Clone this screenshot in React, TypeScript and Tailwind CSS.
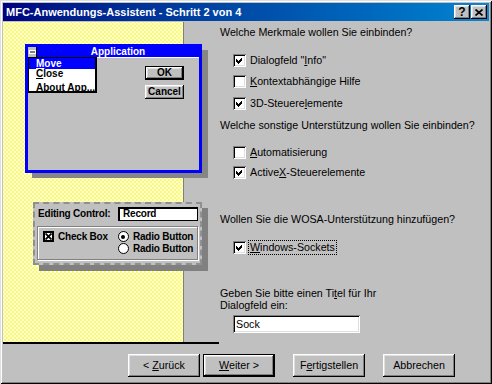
import React from 'react';

const raised =
  'shadow-[inset_-1px_-1px_0_#000000,inset_1px_1px_0_#ffffff,inset_-2px_-2px_0_#808080,inset_2px_2px_0_#dfdfdf]';
const sunken =
  'shadow-[inset_1px_1px_0_#808080,inset_-1px_-1px_0_#ffffff,inset_2px_2px_0_#000000,inset_-2px_-2px_0_#dfdfdf]';

const U = ({ children }: { children: React.ReactNode }) => (
  <span className="underline decoration-1 underline-offset-[1px]">{children}</span>
);

const CheckBox = ({ checked }: { checked: boolean }) => (
  <span className={`block w-[13px] h-[13px] shrink-0 bg-white ${sunken}`}>
    {checked && (
      <svg width="13" height="13" viewBox="0 0 13 13" shapeRendering="crispEdges">
        <polygon points="3,5 5,7 9,3 9,6 5,10 3,8" fill="#000" />
      </svg>
    )}
  </span>
);

const Option = ({ checked, children, focus }: { checked: boolean; children: React.ReactNode; focus?: boolean }) => (
  <div className="flex items-center h-[13px] pl-[13px]">
    <CheckBox checked={checked} />
    <span className={`ml-[3px] leading-[13px] px-[1px] whitespace-nowrap ${focus ? 'outline outline-1 outline-dotted outline-black' : ''}`}>
      {children}
    </span>
  </div>
);

const Button = ({ children, isDefault }: { children: React.ReactNode; isDefault?: boolean }) =>
  isDefault ? (
    <div className="w-[72px] h-[23px] border border-black">
      <div className={`w-full h-full flex items-center justify-center whitespace-pre ${raised}`}>{children}</div>
    </div>
  ) : (
    <div className={`w-[72px] h-[23px] flex items-center justify-center whitespace-pre ${raised}`}>{children}</div>
  );

function TitleBar() {
  return (
    <div className="h-[18px] flex items-center bg-linear-to-r from-[#000080] to-[#1084d0] pl-[3px] pr-[2px]">
      <span className="flex-1 text-white font-bold text-[11px] leading-none whitespace-nowrap">MFC-Anwendungs-Assistent - Schritt 2 von 4</span>
      <div className="flex gap-[1px]">
        <div className={`w-[16px] h-[14px] bg-[#c0c0c0] flex items-center justify-center font-bold text-[12px] leading-none ${raised}`}>
          ?
        </div>
        <div className={`w-[16px] h-[14px] bg-[#c0c0c0] flex items-center justify-center ${raised}`}>
          <svg width="8" height="7" viewBox="0 0 8 7">
            <path d="M0.5 0.5 L7.5 6.5 M7.5 0.5 L0.5 6.5" stroke="#000" strokeWidth="1.7" />
          </svg>
        </div>
      </div>
    </div>
  );
}

function AppSample() {
  return (
    <>
      <div className="absolute left-[29px] top-[28px] w-[176px] h-[128px] bg-[#868686]" />
      <div className="absolute left-[22px] top-[22px] w-[177px] h-[129px] border-[3px] border-[#0000ff] bg-[#c0c0c0] flex flex-col font-bold text-[10px] whitespace-nowrap">
        <div className="h-[10px] bg-[#0000ff] flex items-center">
          <div className="w-[9px] h-[10px] bg-[#c0c0c0] border-r border-black flex items-center justify-center">
            <div className="w-[5px] h-[2px] bg-[#808080] outline outline-1 outline-white" />
          </div>
          <div className="flex-1 text-center text-white leading-none">Application</div>
        </div>
        <div className="h-px bg-white" />
        <div className="flex-1 flex flex-col items-end pt-[8px] pr-[15px] gap-[5px]">
          <div className="w-[39px] h-[14px] border border-black">
            <div className={`w-full h-full flex items-center justify-center leading-none ${raised}`}>OK</div>
          </div>
          <div className={`w-[39px] h-[14px] flex items-center justify-center leading-none ${raised}`}>Cancel</div>
        </div>
        <div className="absolute left-0 top-[10px] w-[69px] h-[36px] bg-white border border-black border-r-2 border-b-2 flex flex-col">
          <div className="h-[11px] bg-[#0000ff] text-white pl-[7px] leading-[11px]">
            <U>M</U>ove
          </div>
          <div className="h-[10px] pl-[7px] leading-[10px]">
            <U>C</U>lose
          </div>
          <div className="h-px bg-black mt-[1px]" />
          <div className="flex-1 pl-[7px] flex items-center">
            <span>
              <U>A</U>bout App...
            </span>
          </div>
        </div>
      </div>
    </>
  );
}

function EditSample() {
  return (
    <>
      <div className="absolute left-[36px] top-[186px] w-[169px] h-[63px] bg-[#808080]" />
      <div className="absolute left-[30px] top-[180px] w-[169px] h-[63px] bg-[#c0c0c0] border-2 border-dashed border-[#909090] font-bold text-[10px] tracking-[-0.2px] px-[1px] pt-[3px] whitespace-nowrap">
        <div className="flex items-center h-[14px]">
          <span className="ml-[2px] leading-none">Editing Control:</span>
          <div className="ml-auto mr-[1px] w-[80px] h-[14px] bg-white border border-black border-t-2 border-l-2 pl-[3px] leading-[10px]">
            Record
          </div>
        </div>
        <div className="mt-[5px] mx-[1px] h-[34px] border border-[#808080] shadow-[1px_1px_0_#ffffff,inset_1px_1px_0_#ffffff] flex pt-[4px] pl-[5px]">
          <div className="flex items-start">
            <div className="w-[11px] h-[11px] bg-white border-2 border-black flex items-center justify-center">
              <svg width="7" height="7" viewBox="0 0 7 7">
                <path d="M0.5 0.5 L6.5 6.5 M6.5 0.5 L0.5 6.5" stroke="#000" strokeWidth="1.8" />
              </svg>
            </div>
            <span className="ml-[4px] leading-[11px]">Check Box</span>
          </div>
          <div className="ml-[10px] flex flex-col gap-[1px]">
            <div className="flex items-center h-[11px]">
              <div className="w-[11px] h-[11px] rounded-full bg-white border border-black flex items-center justify-center">
                <div className="w-[4px] h-[4px] rounded-full bg-black" />
              </div>
              <span className="ml-[4px] leading-none">Radio Button</span>
            </div>
            <div className="flex items-center h-[11px]">
              <div className="w-[11px] h-[11px] rounded-full bg-white border border-black" />
              <span className="ml-[4px] leading-none">Radio Button</span>
            </div>
          </div>
        </div>
      </div>
    </>
  );
}

function LeftPanel() {
  return (
    <div className="relative w-[216px] shrink-0 border-b-2 border-black">
      <div className="w-[181px] h-full bg-white bg-[radial-gradient(circle,#ffff00_0.6px,transparent_0.95px),radial-gradient(circle,#ffff00_0.6px,transparent_0.95px)] bg-[length:4px_4px] bg-[position:0_0,2px_2px] border-r border-[#808080]" />
      <AppSample />
      <EditSample />
    </div>
  );
}

function RightPanel() {
  return (
    <div className="flex-1 flex flex-col pl-[1px] leading-[13px] text-[10.7px] whitespace-nowrap">
      <div className="mt-[4px]">Welche Merkmale wollen Sie einbinden?</div>
      <div className="mt-[15px]">
        <Option checked>
          Dialogfeld "<U>I</U>nfo"
        </Option>
      </div>
      <div className="mt-[8px]">
        <Option checked={false}>
          <U>K</U>ontextabhängige Hilfe
        </Option>
      </div>
      <div className="mt-[9px]">
        <Option checked>
          3D-Steuere<U>l</U>emente
        </Option>
      </div>
      <div className="mt-[9px]">Welche sonstige Unterstützung wollen Sie einbinden?</div>
      <div className="mt-[14px]">
        <Option checked={false}>
          <U>A</U>utomatisierung
        </Option>
      </div>
      <div className="mt-[7px]">
        <Option checked>
          Active<U>X</U>-Steuerelemente
        </Option>
      </div>
      <div className="mt-[34px]">Wollen Sie die WOSA-Unterstützung hinzufügen?</div>
      <div className="mt-[15px]">
        <Option checked focus>
          <U>W</U>indows-Sockets
        </Option>
      </div>
      <div className="mt-[33px] leading-[12px]">
        Geben Sie bitte einen Ti<U>t</U>el für Ihr
        <br />
        Dialogfeld ein:
      </div>
      <div className={`mt-[4px] ml-[13px] w-[127px] h-[18px] bg-white pl-[3px] flex items-center ${sunken}`}>Sock</div>
    </div>
  );
}

export default function App() {
  return (
    <div className="w-[492px] h-[384px] bg-[#c0c0c0] font-['Liberation_Sans',Arial,sans-serif] text-[11px] text-black overflow-hidden">
      <div className="w-full h-full flex flex-col p-[3px] shadow-[inset_1px_1px_0_#dfdfdf,inset_-1px_-1px_0_#000000,inset_2px_2px_0_#ffffff,inset_-2px_-2px_0_#808080]">
        <TitleBar />
        <div className="flex mt-[1px] h-[322px]">
          <LeftPanel />
          <RightPanel />
        </div>
        <div className="flex pl-[125px] pt-[10px] text-[10.7px]">
          <Button>
            {'< '}
            <U>Z</U>urück
          </Button>
          <div className="ml-[3px]">
            <Button isDefault>
              <U>W</U>eiter{' >'}
            </Button>
          </div>
          <div className="ml-[18px]">
            <Button>
              F<U>e</U>rtigstellen
            </Button>
          </div>
          <div className="ml-[18px]">
            <Button>Abbrechen</Button>
          </div>
        </div>
      </div>
    </div>
  );
}
